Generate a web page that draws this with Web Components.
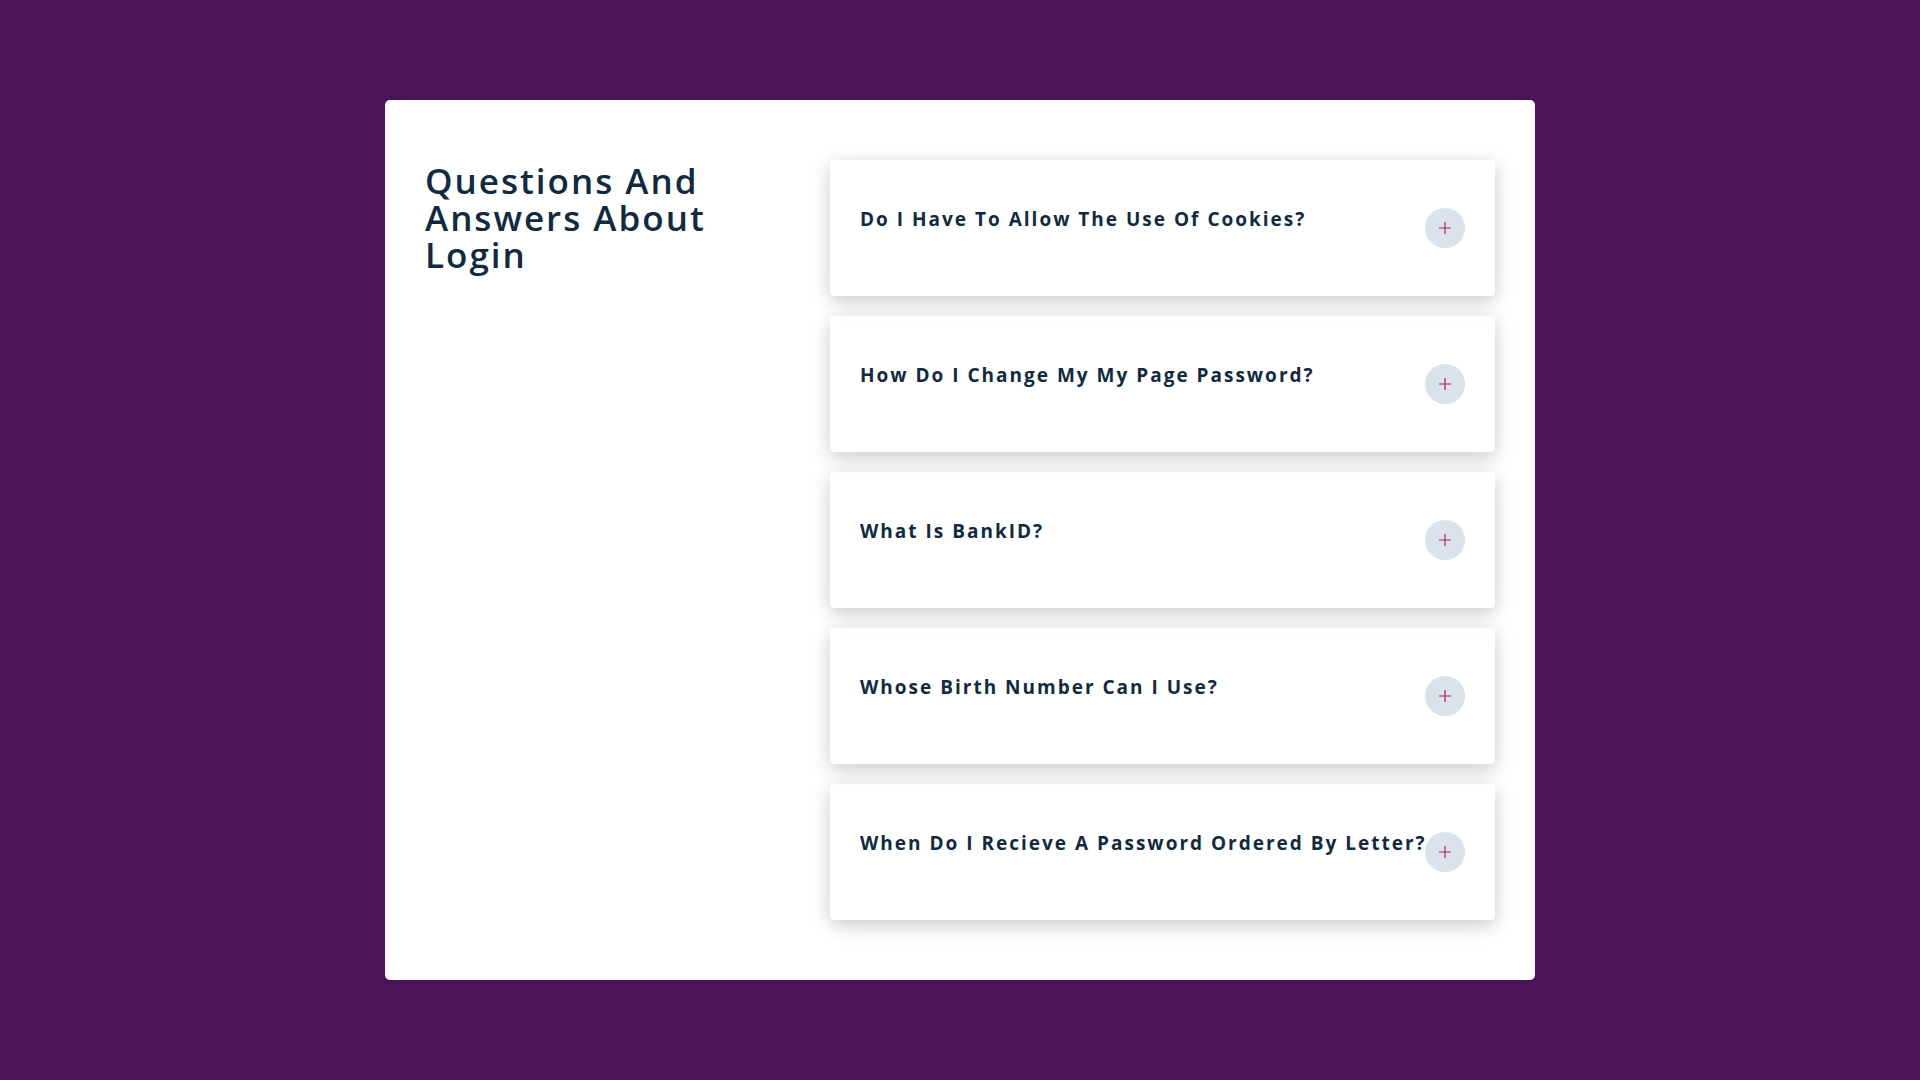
<!DOCTYPE html>
<html lang="en">
<head>
<meta charset="utf-8">
<title>Questions And Answers About Login</title>
<style>
  body {
    margin: 0;
    background: #4b145a;
    color: #102a42;
    font-family: "Segoe UI", "Open Sans", "Noto Sans", sans-serif;
  }
</style>
</head>
<body>
<faq-panel>
  <span slot="title">Questions And Answers About Login</span>
  <faq-item>Do I Have To Allow The Use Of Cookies?</faq-item>
  <faq-item>How Do I Change My My Page Password?</faq-item>
  <faq-item>What Is BankID?</faq-item>
  <faq-item>Whose Birth Number Can I Use?</faq-item>
  <faq-item>When Do I Recieve A Password Ordered By Letter?</faq-item>
</faq-panel>

<template id="faq-panel">
  <style>
    :host { display: flex; min-height: 100vh; align-items: center; justify-content: center; }
    main {
      box-sizing: border-box;
      width: 90vw;
      max-width: 1150px;
      padding: 60px 40px;
      display: grid;
      grid-template-columns: minmax(0, 333px) minmax(0, 1fr);
      gap: 72px;
      background: #fff;
      border-radius: 5px;
    }
    h1 { margin: 0; padding: 2px 0; font-size: 35px; line-height: 37px; font-weight: 600; letter-spacing: 2px; }
    section { display: flex; flex-direction: column; gap: 20px; }
  </style>
  <main>
    <h1><slot name="title"></slot></h1>
    <section><slot></slot></section>
  </main>
</template>

<template id="faq-item">
  <style>
    :host { display: block; }
    article {
      display: flex;
      align-items: flex-start;
      justify-content: space-between;
      padding: 48px 30px;
      border-radius: 4px;
      box-shadow: 0 5px 15px rgba(0, 0, 0, .1), 0 5px 25px rgba(0, 0, 0, .12);
    }
    h2 { min-width: 0; margin: 0; font-size: 19px; line-height: 22px; font-weight: 700; letter-spacing: 2px; white-space: nowrap; }
    button {
      flex: none;
      width: 40px;
      height: 40px;
      padding: 0;
      display: grid;
      place-items: center;
      border: 0;
      border-radius: 50%;
      background: #dae2ec;
      color: #b4255a;
      cursor: pointer;
    }
    svg { display: block; }
  </style>
  <article>
    <h2 id="question"><slot></slot></h2>
    <button type="button" aria-label="Show answer" aria-describedby="question">
      <svg width="12" height="12" viewBox="0 0 12 12" stroke="currentColor" stroke-width="1.2" aria-hidden="true">
        <path d="M6 0V12M0 6H12"/>
      </svg>
    </button>
  </article>
</template>

<script>
  for (const name of ["faq-panel", "faq-item"]) {
    customElements.define(name, class extends HTMLElement {
      constructor() {
        super();
        this.attachShadow({ mode: "open" })
          .append(document.getElementById(name).content.cloneNode(true));
      }
    });
  }
</script>
</body>
</html>
